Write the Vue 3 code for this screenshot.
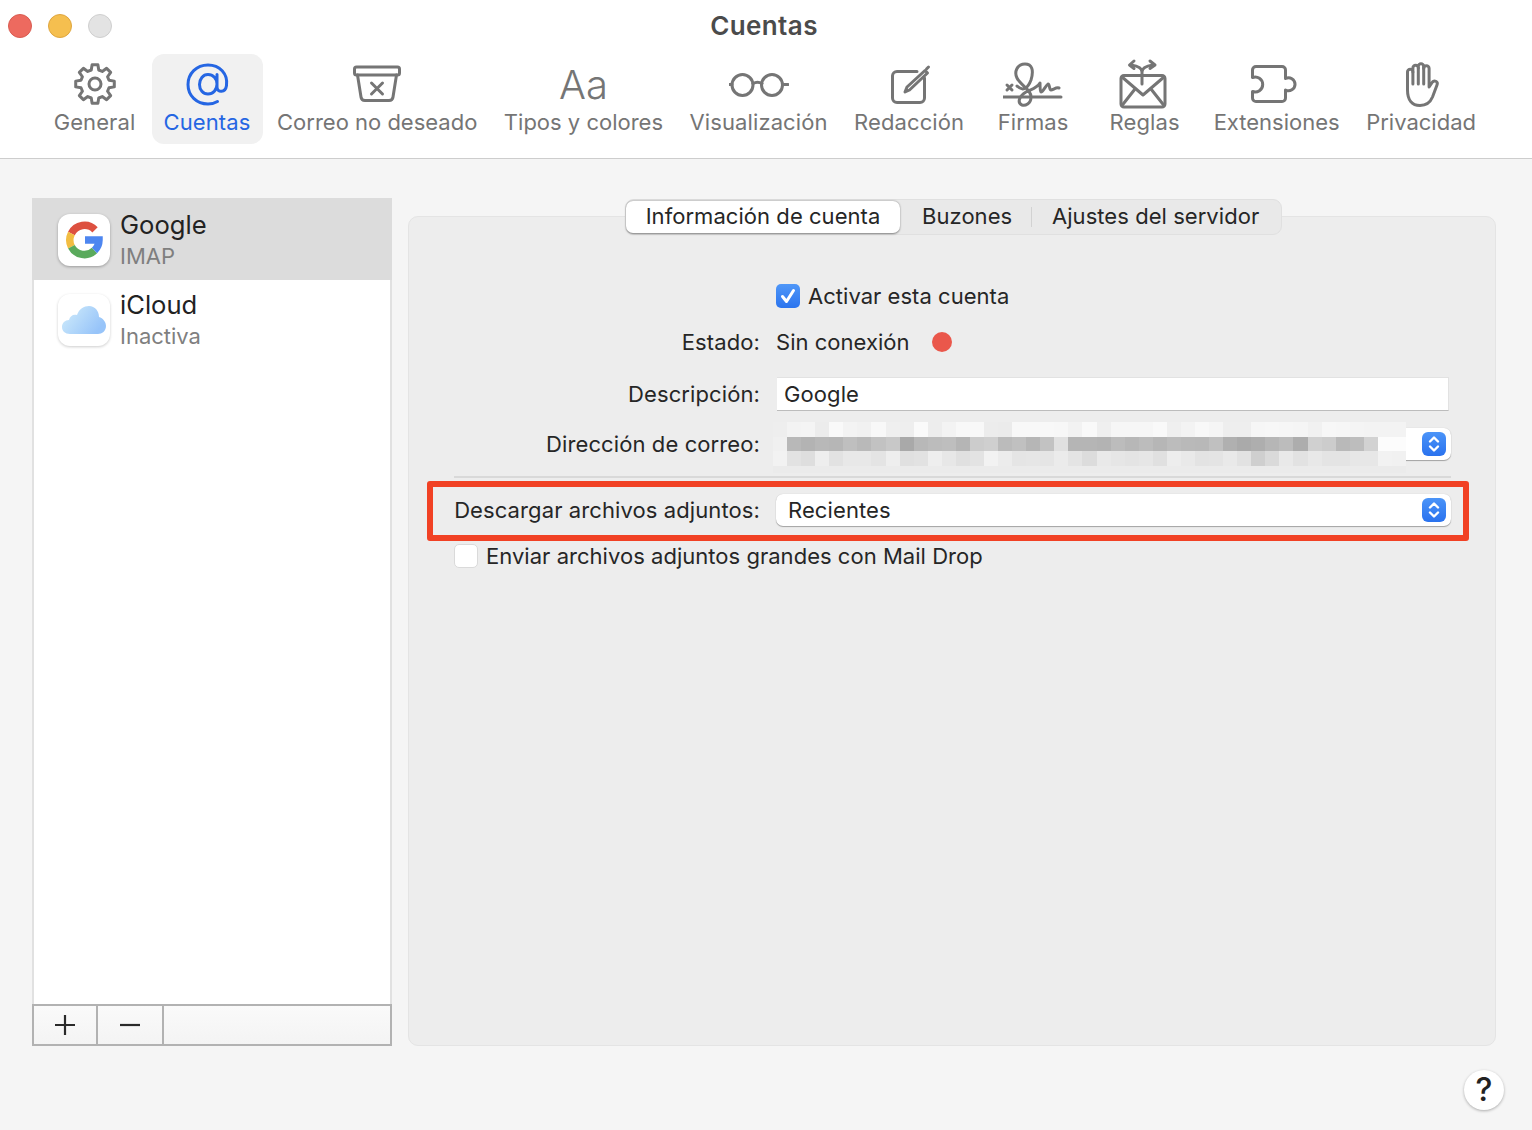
<script setup>
function gear() {
  const cx = 95, cy = 84, pts = []
  for (let i = 0; i < 8; i++) {
    const a = i * 45 - 90
    ;[[14.5, -15], [19.5, -8.5], [19.5, 8.5], [14.5, 15]].forEach(([r, d]) => {
      const t = ((a + d) * Math.PI) / 180
      pts.push((cx + r * Math.cos(t)).toFixed(2) + ' ' + (cy + r * Math.sin(t)).toFixed(2))
    })
  }
  return 'M' + pts.join('L') + 'Z M101 84a6 6 0 1 1-12 0a6 6 0 1 1 12 0Z'
}

const tools = [
  { label: 'General', cx: 95, paths: [gear()] },
  {
    label: 'Cuentas', cx: 206.5, active: true,
    paths: ['M216.5 74.5V87c0 6 8.5 6 9.5-1.5c1.6-12-7-20.5-18.5-20.5C196 65 187.5 73.5 187.5 84.5S196 104 207.500 104c4 0 7-1 9.500-2.500M216.500 84c0 6-4 10-9 10s-8.500-4-8.500-9.500 3.500-10 8.500-10 9 4 9 9.500Z']
  },
  {
    label: 'Correo no deseado', cx: 377.5, tight: true,
    paths: ['M357 67H398a2 2 0 0 1 2 2V73a2 2 0 0 1-2 2H357a2 2 0 0 1-2-2V69a2 2 0 0 1 2-2Z', 'M358 75L361.500 97a4 4 0 0 0 4 3.500H389.500a4 4 0 0 0 4-3.500L397 75', 'M372 83L383 94M383 83L372 94']
  },
  { label: 'Tipos y colores', cx: 584, text: 'Aa', tight: true },
  {
    label: 'Visualización', cx: 759,
    paths: ['M753 85a10.500 10.500 0 1 1-21 0a10.500 10.500 0 1 1 21 0Z', 'M782.500 85a10.500 10.500 0 1 1-21 0a10.500 10.500 0 1 1 21 0Z', 'M753 83.500C755.500 82 759.500 82 762 83.500', 'M729 84.500H732M782.500 84.500H788']
  },
  {
    label: 'Redacción', cx: 909,
    paths: ['M917 71.500H897a4.500 4.500 0 0 0-4.500 4.500V98a4.500 4.500 0 0 0 4.500 4.500H920a4.500 4.500 0 0 0 4.500-4.500V78', 'M905 92L907 87L925 70.500L927.500 73L909.500 90Z', 'M926.500 69L928.500 67']
  },
  {
    label: 'Firmas', cx: 1033,
    paths: ['M1003 97H1061', 'M1007 85L1012 90M1012 85L1007 90', 'M1017 86C1023 92 1028 88 1031 80C1034 70 1032 64 1025 64C1017 64 1014 72 1017 78C1021 86 1031 89 1031 97C1031 104 1025 106 1022 105C1017 103 1019 96 1026 92C1032 89 1037 88 1040 83C1040 88 1040 91 1041 92C1043 92 1046 85 1048 84C1050 84 1049 90 1051 90C1053 90 1056 87 1059 88']
  },
  {
    label: 'Reglas', cx: 1145,
    paths: ['M1124 75.500H1162a3 3 0 0 1 3 3V104a3 3 0 0 1-3 3H1124a3 3 0 0 1-3-3V78.500a3 3 0 0 1 3-3Z', 'M1122 77L1143 95L1164 77', 'M1122 105.500L1135 89M1164 105.500L1151 89', 'M1142 84V72C1142 68 1138 66 1131 65M1142 72C1142 68 1146 66 1153 65', 'M1134 61L1129.500 65L1134 68.500M1150 61L1155 65L1150 68.500']
  },
  {
    label: 'Extensiones', cx: 1277, tight: true,
    paths: ['M1256 66.500H1282a3.500 3.500 0 0 1 3.500 3.500V78.500A6.500 6.500 0 1 1 1285.500 90V98a3.500 3.500 0 0 1-3.500 3.500H1256a3.500 3.500 0 0 1-3.500-3.500V91.500A7.500 7.500 0 1 0 1252.500 77.500V70a3.500 3.500 0 0 1 3.500-3.500Z']
  },
  {
    label: 'Privacidad', cx: 1422, tight: true,
    paths: ['M1408.500 90V72a2.700 2.700 0 0 1 5.400 0V68a2.700 2.700 0 0 1 5.400 0V66.500a2.700 2.700 0 0 1 5.400 0V68.500a2.700 2.700 0 0 1 5.400 0V87L1433.500 82C1435 80 1439.500 81 1438 85L1433.500 97C1431 103 1427 105.500 1421 105.500C1413 105.500 1408.500 100 1408.500 90Z', 'M1413.900 72V84M1419.300 68V84M1424.700 67V84']
  }
]

const hex = s => s.match(/../g)
const mosaic = [
  hex('eef3f4ecf9f3f1f8efeefaedf3f8f8ecebf8f8f8f7f2f9eff6f6f6f9eff3f8f5eeeef6f7f6f5f1f7f6f4f3f3f3'),
  hex('f0b8b3b8b6bfb9c2c8a9b8bcbeb5cccfbbc0b6c2e0b5b5b3bcb7bcb6bcb9b8c0b0aaaeb6bcadd0ccb9bdd2fcfc'),
  hex('f2e2deeee2e8e8e4eee0e2eee7e0e3f2ece5e6e5ebe4dce9e6e4e6e0ede9e3e4e9e2cfdae9e2e8e4e4e7e7f2f1')
]

const tabs = ['Buzones', 'Ajustes del servidor']
</script>

<template>
  <div class="window">
    <header class="top">
      <div class="titlebar">
        <div class="lights">
          <span class="light red"></span>
          <span class="light amber"></span>
          <span class="light grey"></span>
        </div>
        <div class="title">Cuentas</div>
      </div>
      <nav class="toolbar">
        <div v-for="t in tools" :key="t.label" class="tool" :class="{ active: t.active, tight: t.tight }">
          <div v-if="t.text" class="tool-glyph">{{ t.text }}</div>
          <svg v-else class="tool-icon" width="60" height="52" :viewBox="`${t.cx - 30} 58 60 52`">
            <path v-for="d in t.paths" :key="d" :d="d" />
          </svg>
          <span class="tool-label">{{ t.label }}</span>
        </div>
      </nav>
    </header>

    <main class="content">
      <aside class="sidebar">
        <div class="list">
          <div class="account selected">
            <div class="app-icon">
              <svg width="52" height="52" viewBox="0 0 52 52" fill="none">
                <path d="M37 15.800A14.600 14.600 0 0 0 13.400 19.500" stroke="#dd5140" stroke-width="7.500" />
                <path d="M13.400 19.500A14.600 14.600 0 0 0 13.400 32.700" stroke="#f2bd42" stroke-width="7.500" />
                <path d="M13.400 32.700A14.600 14.600 0 0 0 36.500 36.500" stroke="#5aaa5c" stroke-width="7.500" />
                <path d="M36.500 36.500A14.600 14.600 0 0 0 41 26H27" stroke="#4d86f0" stroke-width="7.500" />
              </svg>
            </div>
            <div class="account-text">
              <div class="account-name">Google</div>
              <div class="account-sub">IMAP</div>
            </div>
          </div>
          <div class="account second">
            <div class="app-icon">
              <svg width="52" height="52" viewBox="0 0 52 52">
                <defs>
                  <linearGradient id="cloud" x1="0" y1="0" x2="1" y2="0.500">
                    <stop offset="0" stop-color="#d3eefb" />
                    <stop offset="1" stop-color="#97c4f9" />
                  </linearGradient>
                </defs>
                <path fill="url(#cloud)" d="M12 40C7 40 4 37 4 33C4 29 7 26 11 26C12 22 15 20 19 21C21 15 26 12 31 12C37 12 41 17 41 23C45 24 48 28 48 32C48 37 44 40 40 40Z" />
              </svg>
            </div>
            <div class="account-text">
              <div class="account-name">iCloud</div>
              <div class="account-sub">Inactiva</div>
            </div>
          </div>
        </div>
        <div class="list-actions">
          <div class="action plus">
            <svg width="22" height="22" viewBox="0 0 22 22"><path d="M11 1V21M1 11H21" /></svg>
          </div>
          <div class="action minus">
            <svg width="22" height="22" viewBox="0 0 22 22"><path d="M1 11H21" /></svg>
          </div>
          <div class="action rest"></div>
        </div>
      </aside>

      <section class="panel">
        <div class="tabs">
          <div class="tab current">Información de cuenta</div>
          <div class="tab buzones">{{ tabs[0] }}</div>
          <span class="tab-sep"></span>
          <div class="tab ajustes">{{ tabs[1] }}</div>
        </div>

        <div class="row r-active">
          <div class="lbl"></div>
          <span class="check on">
            <svg width="24" height="24" viewBox="0 0 24 24"><path d="M6.500 12.500L10.500 17.500L17.500 6.500" /></svg>
          </span>
          <span class="check-text">Activar esta cuenta</span>
        </div>

        <div class="row r-state">
          <div class="lbl">Estado:</div>
          <span class="state-text">Sin conexión</span>
          <span class="dot"></span>
        </div>

        <div class="row r-desc">
          <div class="lbl">Descripción:</div>
          <div class="input">Google</div>
        </div>

        <div class="row r-mail">
          <div class="lbl">Dirección de correo:</div>
          <div class="select mail">
            <span class="stepper">
              <svg width="24" height="24" viewBox="0 0 24 24"><path d="M8 9.500L12 5.500L16 9.500M8 14.500L12 18.500L16 14.500" /></svg>
            </span>
            <div class="mosaic">
              <div v-for="(r, i) in mosaic" :key="i" class="mosaic-row">
                <span v-for="(c, j) in r" :key="j" :style="{ background: '#' + c + c + c }"></span>
              </div>
              <div class="mosaic-foot"></div>
            </div>
          </div>
        </div>

        <div class="sep"></div>

        <div class="highlight">
          <div class="lbl hl-lbl">Descargar archivos adjuntos:</div>
          <div class="select">
            <span>Recientes</span>
            <span class="stepper">
              <svg width="24" height="24" viewBox="0 0 24 24"><path d="M8 9.500L12 5.500L16 9.500M8 14.500L12 18.500L16 14.500" /></svg>
            </span>
          </div>
        </div>

        <div class="r-drop">
          <span class="check"></span>
          <span class="check-text">Enviar archivos adjuntos grandes con Mail Drop</span>
        </div>
      </section>
    </main>

    <footer class="foot">
      <div class="help">?</div>
    </footer>
  </div>
</template>

<style>
html, body { margin: 0; background: #f5f5f5; }
</style>

<style scoped>
.window {
  width: 1532px;
  height: 1130px;
  overflow: hidden;
  background: #f5f5f5;
  font-family: Inter, "Liberation Sans", sans-serif;
  font-size: 22px;
  color: #262626;
  letter-spacing: 0.1px;
}
.top {
  height: 158px;
  background: #fff;
  border-bottom: 1px solid #cdcdcd;
}
.titlebar {
  height: 50px;
  display: flex;
  align-items: center;
  padding-left: 8px;
  padding-top: 2px;
  box-sizing: border-box;
}
.lights { display: flex; gap: 16px; }
.light {
  width: 24px;
  height: 24px;
  border-radius: 50%;
  box-sizing: border-box;
  border: 1px solid;
}
.red { background: #ed6a5f; border-color: #d95c51; }
.amber { background: #f5bf4f; border-color: #dfa63f; }
.grey { background: #e3e3e3; border-color: #cfcfcf; }
.title {
  flex: 1;
  padding: 0 116px 2px 0;
  text-align: center;
  font-size: 26px;
  font-weight: 600;
  color: #4b4b4b;
  letter-spacing: 0.4px;
}
.toolbar {
  display: flex;
  gap: 2.5px;
  margin-top: 4px;
  padding-left: 40px;
}
.tool {
  min-width: 109px;
  height: 90px;
  box-sizing: border-box;
  padding: 4px 12px 0;
  border-radius: 12px;
  display: flex;
  flex-direction: column;
  align-items: center;
  color: #757575;
}
.tool.tight { letter-spacing: 0; }
.tool.active {
  min-width: 111px;
  background: #f1f1f1;
  color: #2566e3;
}
.tool-icon {
  display: block;
  flex: none;
  fill: none;
  stroke: currentColor;
  stroke-width: 3;
  stroke-linecap: round;
  stroke-linejoin: round;
}
.tool-glyph {
  height: 52px;
  line-height: 54px;
  font-size: 40px;
  font-weight: 300;
  color: #757575;
}
.tool-label {
  line-height: 26px;
  white-space: nowrap;
  margin-top: -1px;
}
.content {
  display: flex;
  gap: 16px;
  padding: 39px 36px 0 32px;
}
.sidebar {
  width: 360px;
  height: 848px;
  display: flex;
  flex-direction: column;
  flex: none;
}
.list {
  flex: 1;
  background: #fff;
  border-left: 2px solid #e1e1e1;
  border-right: 2px solid #e1e1e1;
}
.account {
  height: 80px;
  margin: 0 -2px;
  padding: 16px 0 0 26px;
  display: flex;
  gap: 10px;
  box-sizing: border-box;
}
.account.second { padding-top: 14px; }
.account.selected {
  height: 82px;
  background: #dcdcdc;
}
.app-icon {
  width: 52px;
  height: 52px;
  border-radius: 12px;
  background: #fff;
  box-shadow: 0 1px 3px rgba(0, 0, 0, 0.3);
  flex: none;
}
.app-icon svg { display: block; }
.account.second .app-icon { box-shadow: 0 1px 3px rgba(0, 0, 0, 0.2); }
.account-text { margin-top: -6px; }
.account-name {
  font-size: 25.6px;
  letter-spacing: 0;
  line-height: 34px;
  color: #222;
}
.account-sub {
  font-size: 22px;
  letter-spacing: 0;
  line-height: 28px;
  color: #7f7f7f;
}
.list-actions {
  height: 42px;
  display: flex;
  box-sizing: border-box;
  border: 2px solid #b2b2b2;
  background: linear-gradient(#fafafa, #f4f4f4);
}
.action {
  border-right: 2px solid #b2b2b2;
  display: flex;
  align-items: center;
  justify-content: center;
  box-sizing: border-box;
}
.action.plus { width: 64px; }
.action.minus { width: 66px; }
.action.rest { flex: 1; border-right: none; }
.action svg { fill: none; stroke: #2a2a2a; stroke-width: 2.200; }
.panel {
  width: 1088px;
  height: 830px;
  margin-top: 18px;
  box-sizing: border-box;
  background: #ededed;
  border: 1px solid #e4e4e4;
  border-radius: 10px;
  display: flex;
  flex-direction: column;
  align-items: flex-start;
}
.tabs {
  margin: -18px 0 0 216px;
  height: 36px;
  box-sizing: border-box;
  border: 1px solid #e0e0e0;
  border-radius: 9px;
  background: #e9e9e9;
  display: flex;
  align-items: center;
  width: 657px;
  letter-spacing: 0.05px;
}
.tab { white-space: nowrap; line-height: 30px; margin-top: -2px; }
.tab.current {
  width: 274px;
  height: 32px;
  margin-top: 0;
  text-align: center;
  background: #fff;
  border-radius: 7px;
  box-shadow: 0 0.500px 2px rgba(0, 0, 0, 0.45);
}
.buzones { margin-left: 22px; width: 109px; }
.tab-sep { width: 1px; height: 20px; background: #d2d2d2; }
.ajustes { margin-left: 20px; }
.row {
  display: flex;
  align-items: center;
  flex: none;
}
.lbl {
  width: 351px;
  margin-right: 16px;
  text-align: right;
  flex: none;
  white-space: nowrap;
}
.r-active { height: 24px; margin-top: 49px; }
.r-state { height: 24px; margin-top: 22px; }
.r-desc { height: 34px; margin-top: 23px; }
.r-mail { height: 32px; margin-top: 17px; }
.check {
  width: 24px;
  height: 24px;
  box-sizing: border-box;
  background: #fff;
  border: 1px solid #dadada;
  border-radius: 5px;
  flex: none;
}
.check.on {
  border: none;
  background: linear-gradient(#4f97f8, #2b74ee);
}
.check svg { display: block; fill: none; stroke: #fff; stroke-width: 3; stroke-linecap: round; stroke-linejoin: round; }
.check-text { margin-left: 8px; white-space: nowrap; letter-spacing: 0.03px; }
.state-text { letter-spacing: 0.03px; }
.dot {
  width: 20px;
  height: 20px;
  margin-left: 22px;
  border-radius: 50%;
  background: #ea574b;
}
.input {
  width: 672px;
  height: 34px;
  margin-left: 1px;
  padding-left: 7px;
  line-height: 33px;
  box-sizing: border-box;
  background: #fff;
  border: 1px solid #e2e2e2;
  border-bottom-color: #bcbcbc;
  border-left: none;
}
.select {
  position: relative;
  width: 675px;
  height: 32px;
  box-sizing: border-box;
  background: #fff;
  border-radius: 7px;
  box-shadow: 0 1px 1px rgba(0, 0, 0, 0.3), 0 0 1px rgba(0, 0, 0, 0.2);
  display: flex;
  align-items: center;
  justify-content: space-between;
  padding: 0 5px 0 12px;
  flex: none;
}
.select.mail { justify-content: flex-end; }
.stepper {
  width: 24px;
  height: 24px;
  border-radius: 6px;
  background: linear-gradient(#4b94f8, #2a72ee);
  flex: none;
}
.stepper svg { display: block; fill: none; stroke: #fff; stroke-width: 2.400; stroke-linecap: round; stroke-linejoin: round; }
.mosaic {
  position: absolute;
  left: -3px;
  top: -6px;
  width: 633px;
}
.mosaic-row {
  display: grid;
  grid-template-columns: repeat(45, 1fr);
  height: 14.500px;
}
.mosaic-foot { height: 7px; background: #ebebeb; }
.sep {
  width: 997px;
  height: 2px;
  margin: 16px 0 0 45px;
  background: #d9d9d9;
  flex: none;
}
.highlight {
  width: 1042px;
  height: 60px;
  margin: 3px 0 0 18px;
  box-sizing: border-box;
  border: 6px solid #f14124;
  border-radius: 3px;
  display: flex;
  align-items: center;
  padding-bottom: 2px;
  flex: none;
}
.hl-lbl { width: 327px; }
.r-drop {
  margin: 3px 0 0 45px;
  display: flex;
  align-items: center;
  height: 24px;
  flex: none;
}
.foot {
  display: flex;
  justify-content: flex-end;
  padding: 24px 28px 0 0;
}
.help {
  width: 40px;
  height: 40px;
  border-radius: 50%;
  background: #fff;
  box-shadow: 0 1px 3px rgba(0, 0, 0, 0.3);
  text-align: center;
  line-height: 40px;
  font-size: 32px;
  font-weight: 500;
  color: #222;
}
</style>
